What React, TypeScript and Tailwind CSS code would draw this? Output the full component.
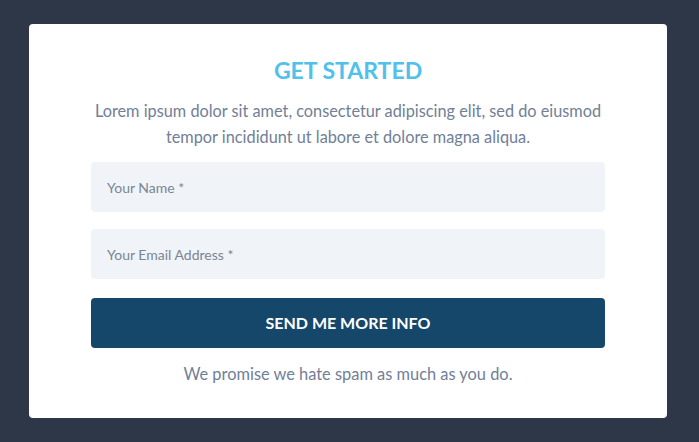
export default function App() {
  return (
    <div
      className="flex min-h-[442px] w-full items-start bg-[#2d3748] pt-[24px] pl-[29px]"
      style={{ fontFamily: "Lato, 'Noto Sans', sans-serif" }}
    >
      <div className="flex w-[638px] flex-col items-center rounded-[4px] bg-white px-[60px] pt-[32px] pb-[31px]">
        <h1 className="text-[23px] leading-[28px] font-bold text-[#4fc1ea]">GET STARTED</h1>
        <p className="mt-[14px] text-center text-[16.3px] leading-[26px] text-[#718096]">
          Lorem ipsum dolor sit amet, consectetur adipiscing elit, sed do eiusmod tempor incididunt ut labore et dolore
          magna aliqua.
        </p>
        <form className="mt-[12px] flex w-full flex-col px-[2px]">
          <input
            type="text"
            placeholder="Your Name *"
            className="h-[50px] w-full rounded-[4px] bg-[#f0f4f8] px-[16px] text-[14px] text-[#4a5568] outline-none placeholder:text-[#7b8594]"
          />
          <input
            type="email"
            placeholder="Your Email Address *"
            className="mt-[17px] h-[50px] w-full rounded-[4px] bg-[#f0f4f8] px-[16px] text-[14px] text-[#4a5568] outline-none placeholder:text-[#7b8594]"
          />
          <button
            type="button"
            className="mt-[19px] h-[50px] w-full rounded-[4px] bg-[#15476b] text-[16px] font-bold text-white"
          >
            SEND ME MORE INFO
          </button>
        </form>
        <p className="mt-[13px] text-[16.4px] leading-[26px] text-[#718096]">We promise we hate spam as much as you do.</p>
      </div>
    </div>
  );
}
